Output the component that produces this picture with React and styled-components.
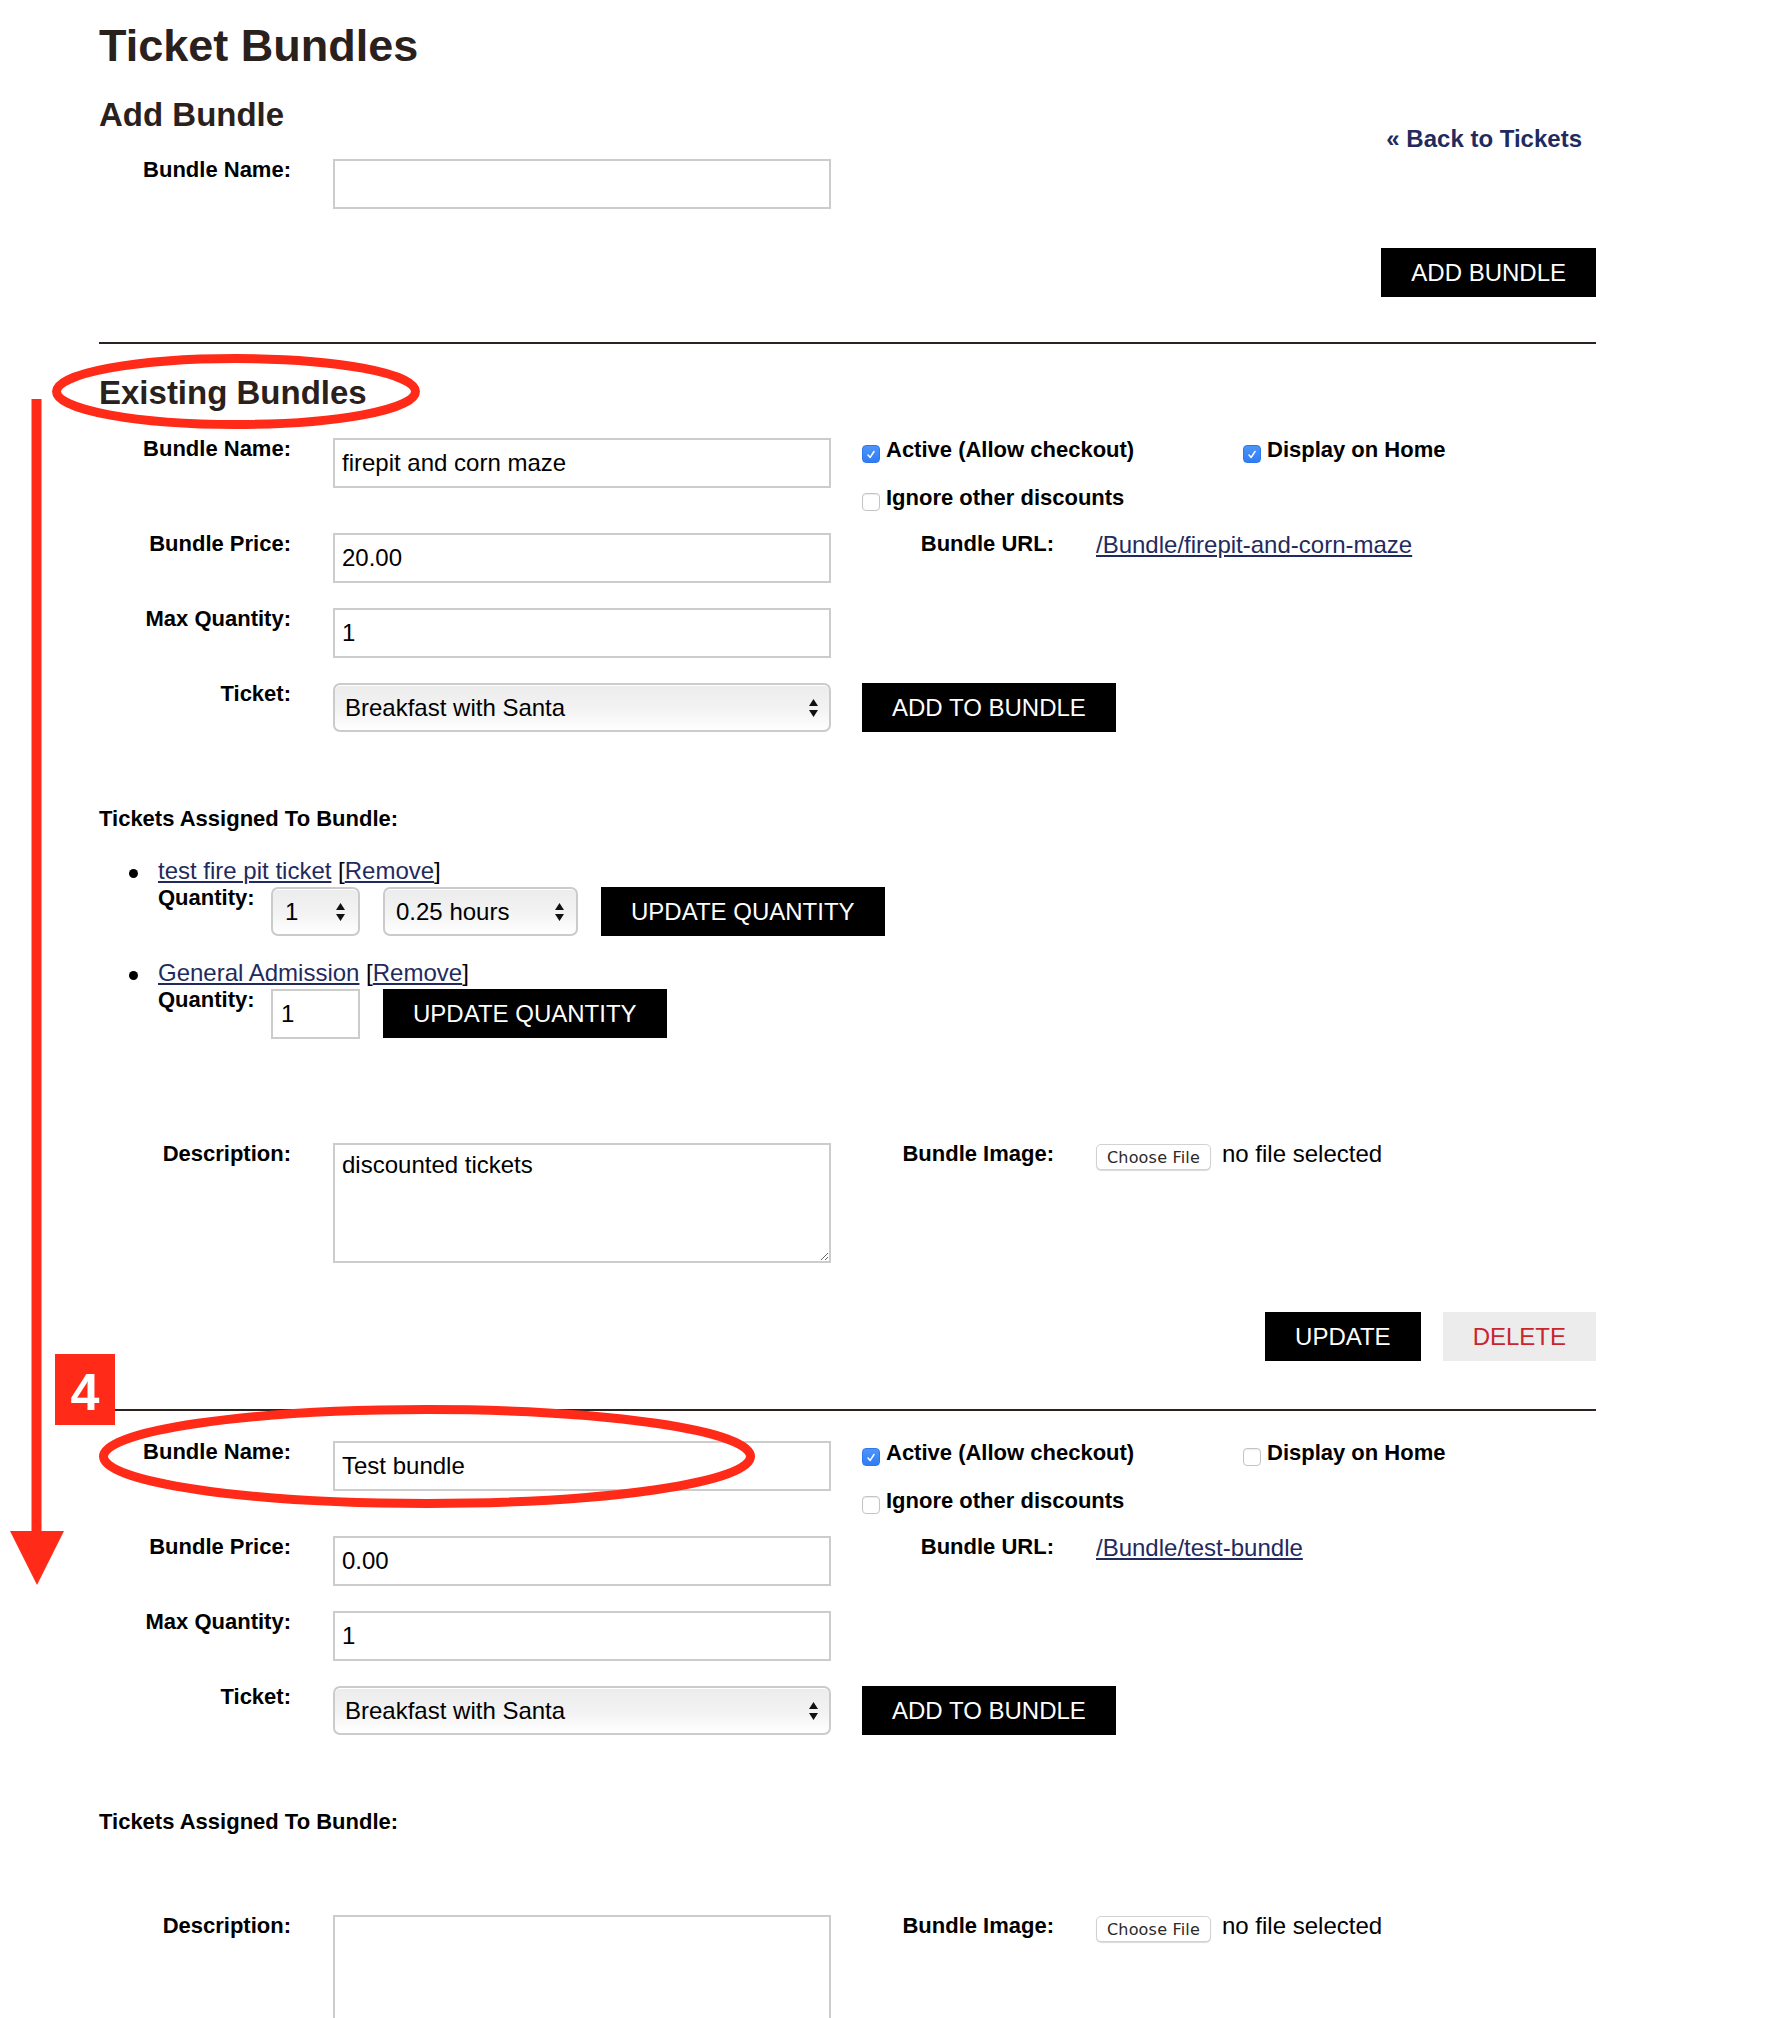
import React from 'react';
import styled, { createGlobalStyle } from 'styled-components';

const bundles = [
  {
    id: 1,
    name: 'firepit and corn maze',
    price: '20.00',
    maxQty: '1',
    active: true,
    home: true,
    ignore: false,
    slug: 'firepit-and-corn-maze',
    description: 'discounted tickets',
    tickets: [
      { name: 'test fire pit ticket', qty: '1', hours: '0.25 hours' },
      { name: 'General Admission', qty: '1' }
    ]
  },
  {
    id: 2,
    name: 'Test bundle',
    price: '0.00',
    maxQty: '1',
    active: true,
    home: false,
    ignore: false,
    slug: 'test-bundle',
    description: '',
    tickets: []
  }
];

const Arrows = () => (
  <svg width="11" height="20" viewBox="0 0 11 20">
    <path d="M5.5 1 L10 8 H1 Z M5.5 19 L10 12 H1 Z" fill="#111" />
  </svg>
);

const Check = ({ checked, children }) => (
  <CheckLabel>
    <Box $checked={checked}>
      {checked && (
        <svg width="12" height="12" viewBox="0 0 12 12">
          <path
            d="M3 7 L5.2 9.4 L9 3.5"
            fill="none"
            stroke="#fff"
            strokeWidth="1.5"
            strokeLinecap="round"
            strokeLinejoin="round"
          />
        </svg>
      )}
    </Box>
    {children}
  </CheckLabel>
);

const Select = ({ width, value, pad }) => (
  <SelectBox $width={width} $pad={pad}>
    <span>{value}</span>
    <Arrows />
  </SelectBox>
);

const BundleForm = ({ bundle, top }) => (
  <>
    <Fields $top={top}>
      <Row>
        <Half>
          <Label>Bundle Name:</Label>
          <TextInput defaultValue={bundle.name} />
        </Half>
        <CheckGroup>
          <Check checked={bundle.active}>Active (Allow checkout)</Check>
          <Check checked={bundle.home}>Display on Home</Check>
          <Check checked={bundle.ignore}>Ignore other discounts</Check>
        </CheckGroup>
      </Row>
      <Row>
        <Half>
          <Label>Bundle Price:</Label>
          <TextInput defaultValue={bundle.price} />
        </Half>
        <Half>
          <Label>Bundle URL:</Label>
          <UrlLink href="#">/Bundle/{bundle.slug}</UrlLink>
        </Half>
      </Row>
      <Row>
        <Half>
          <Label>Max Quantity:</Label>
          <TextInput defaultValue={bundle.maxQty} />
        </Half>
      </Row>
      <Row>
        <Half>
          <Label>Ticket:</Label>
          <Select width={498} pad={10} value="Breakfast with Santa" />
        </Half>
        <div>
          <Button>Add to Bundle</Button>
        </div>
      </Row>
    </Fields>

    <AssignedTitle>Tickets Assigned To Bundle:</AssignedTitle>
    {bundle.tickets.length > 0 && (
      <TicketList>
        {bundle.tickets.map((t) => (
          <TicketItem key={t.name}>
            <TicketLink href="#">{t.name}</TicketLink> [<TicketLink href="#">Remove</TicketLink>]
            <QtyRow>
              <QtyLabel>Quantity:</QtyLabel>
              {t.hours ? (
                <>
                  <Select width={89} pad={12} value={t.qty} />
                  <Select width={195} pad={11} value={t.hours} />
                </>
              ) : (
                <QtyInput defaultValue={t.qty} />
              )}
              <Button>Update Quantity</Button>
            </QtyRow>
          </TicketItem>
        ))}
      </TicketList>
    )}

    <DescRow>
      <Half>
        <Label>Description:</Label>
        <TextArea defaultValue={bundle.description} />
      </Half>
      <Half>
        <Label>Bundle Image:</Label>
        <FileField>
          <FileButton>Choose File</FileButton>
          <NoFile>no file selected</NoFile>
        </FileField>
      </Half>
    </DescRow>

    <Actions>
      <Button>Update</Button>
      <DeleteButton>Delete</DeleteButton>
    </Actions>
    <Divider $top={48} />
  </>
);

const App = () => {
  return (
    <Page>
      <GlobalStyle />
      <Content>
        <Title>Ticket Bundles</Title>

        <AddSection>
          <div>
            <SectionTitle>Add Bundle</SectionTitle>
            <AddField>
              <Label>Bundle Name:</Label>
              <TextInput />
            </AddField>
          </div>
          <AddSide>
            <BackLink href="#">« Back to Tickets</BackLink>
            <AddButton>Add Bundle</AddButton>
          </AddSide>
        </AddSection>
        <Divider $top={45} />

        <SectionTitle $top={30}>Existing Bundles</SectionTitle>
        {bundles.map((b, i) => (
          <BundleForm key={b.id} bundle={b} top={i === 0 ? 26 : 30} />
        ))}
      </Content>

      <Annotations width="1768" height="2018" viewBox="0 0 1768 2018">
        <ellipse cx="236" cy="391.5" rx="179.5" ry="33" fill="none" stroke="#ff2a17" strokeWidth="9" />
        <rect x="31.5" y="399" width="10" height="1140" fill="#ff2a17" />
        <polygon points="10,1531 64,1531 37,1585" fill="#ff2a17" />
        <ellipse cx="427" cy="1456.5" rx="323.5" ry="47" fill="none" stroke="#ff2a17" strokeWidth="9" />
      </Annotations>
      <StepBadge>4</StepBadge>
    </Page>
  );
};

export default App;

const GlobalStyle = createGlobalStyle`
  body {
    margin: 0;
    background: #fff;
    color: #000;
    font-family: 'Liberation Sans', Arial, Helvetica, sans-serif;
  }
  input, textarea, button {
    font-family: inherit;
  }
`;

const Page = styled.div`
  position: relative;
  width: 1768px;
  min-height: 2018px;
  overflow: hidden;
  padding: 20px 0 0 99px;
  box-sizing: border-box;
`;

const Content = styled.div`
  width: 1497px;
`;

const Title = styled.h1`
  margin: 0;
  font-size: 45px;
  line-height: 52px;
  font-weight: bold;
  color: #2b211c;
`;

const SectionTitle = styled.h2`
  margin: ${(p) => p.$top || 0}px 0 0;
  font-size: 33px;
  line-height: 38px;
  font-weight: bold;
  color: #2b211c;
`;

const AddSection = styled.div`
  display: flex;
  justify-content: space-between;
  align-items: flex-start;
  margin-top: 24px;
`;

const AddField = styled.div`
  display: flex;
  align-items: flex-start;
  gap: 42px;
  margin-top: 25px;
`;

const AddSide = styled.div`
  display: flex;
  flex-direction: column;
  align-items: flex-end;
`;

const BackLink = styled.a`
  margin: 29px 14px 0 0;
  font-size: 24px;
  line-height: 28px;
  font-weight: bold;
  color: #1f2b5e;
  text-decoration: none;
`;

const Divider = styled.div`
  height: 2px;
  margin-top: ${(p) => p.$top}px;
  background: #2b2320;
`;

const Fields = styled.div`
  display: flex;
  flex-direction: column;
  gap: 25px;
  margin-top: ${(p) => p.$top}px;
`;

const Row = styled.div`
  display: grid;
  grid-template-columns: 732px 734px;
  column-gap: 31px;
  align-items: start;
`;

const DescRow = styled(Row)`
  margin-top: 80px;
`;

const Half = styled.div`
  display: flex;
  align-items: flex-start;
  gap: 42px;
`;

const Label = styled.label`
  flex-shrink: 0;
  width: 192px;
  font-size: 22px;
  line-height: 22px;
  font-weight: bold;
  text-align: right;
  white-space: nowrap;
`;

const TextInput = styled.input`
  width: 498px;
  height: 50px;
  box-sizing: border-box;
  border: 2px solid #cccccc;
  padding: 0 7px;
  font-size: 24px;
  color: #000;
  background: #fff;
  outline: none;
`;

const TextArea = styled.textarea`
  width: 498px;
  height: 120px;
  box-sizing: border-box;
  border: 2px solid #cccccc;
  padding: 6px 7px;
  font-size: 24px;
  line-height: 28px;
  color: #000;
  resize: vertical;
  outline: none;
`;

const SelectBox = styled.div`
  width: ${(p) => p.$width}px;
  height: 49px;
  box-sizing: border-box;
  flex-shrink: 0;
  display: flex;
  align-items: center;
  justify-content: space-between;
  padding: 0 ${(p) => p.$pad}px 0 ${(p) => p.$pad}px;
  border: 2px solid #cbcbcb;
  border-radius: 7px;
  background: linear-gradient(to bottom, #ececec 0%, #f3f3f3 55%, #ffffff 100%);
  box-shadow: inset 0 1px 0 #ffffff;
  font-size: 24px;
  color: #000;
  white-space: nowrap;
`;

const CheckGroup = styled.div`
  display: grid;
  grid-template-columns: 381px auto;
  grid-template-rows: 24px 24px;
  row-gap: 24px;
  height: 70px;
`;

const CheckLabel = styled.label`
  display: flex;
  align-items: flex-start;
  gap: 6px;
  font-size: 22px;
  line-height: 24px;
  font-weight: bold;
  white-space: nowrap;
`;

const Box = styled.span`
  flex-shrink: 0;
  width: 18px;
  height: 18px;
  margin-top: 7px;
  box-sizing: border-box;
  border-radius: 4px;
  display: flex;
  align-items: center;
  justify-content: center;
  background: ${(p) => (p.$checked ? 'linear-gradient(to bottom, #4c95fa, #2f7cf4)' : '#fff')};
  border: 1px solid ${(p) => (p.$checked ? '#2f78ea' : '#c4c4c4')};
  box-shadow: ${(p) => (p.$checked ? 'none' : 'inset 0 1px 1px rgba(0, 0, 0, 0.08)')};
`;

const UrlLink = styled.a`
  font-size: 24px;
  line-height: 24px;
  color: #1f2b5e;
  text-decoration: underline;
  white-space: nowrap;
`;

const Button = styled.button`
  height: 49px;
  padding: 0 30px;
  border: none;
  background: #000;
  color: #fff;
  font-size: 24px;
  line-height: 1;
  text-transform: uppercase;
  white-space: nowrap;
  flex-shrink: 0;
  cursor: pointer;
`;

const AddButton = styled(Button)`
  margin-top: 95px;
`;

const DeleteButton = styled(Button)`
  background: #ececec;
  color: #c9252d;
`;

const AssignedTitle = styled.div`
  margin-top: 74px;
  font-size: 22px;
  line-height: 26px;
  font-weight: bold;
`;

const TicketList = styled.ul`
  margin: 25px 0 0;
  padding: 0 0 24px 59px;
  list-style: none;
  font-size: 24px;
  line-height: 28px;
`;

const TicketItem = styled.li`
  position: relative;

  &::before {
    content: '';
    position: absolute;
    left: -29px;
    top: 12px;
    width: 9px;
    height: 9px;
    border-radius: 50%;
    background: #000;
  }

  & + & {
    margin-top: 23px;
  }
`;

const TicketLink = styled.a`
  color: #1f2b5e;
  text-decoration: underline;
`;

const QtyRow = styled.div`
  display: flex;
  align-items: flex-start;
  gap: 23px;
  margin-top: 2px;
`;

const QtyLabel = styled.span`
  width: 90px;
  font-size: 22px;
  line-height: 22px;
  font-weight: bold;
`;

const QtyInput = styled(TextInput)`
  width: 89px;
  padding: 0 8px;
`;

const FileField = styled.div`
  display: flex;
  align-items: flex-start;
  gap: 11px;
`;

const FileButton = styled.button`
  width: 115px;
  height: 26px;
  margin-top: 1px;
  padding: 0;
  border: 1px solid #d2d2d2;
  border-radius: 5px;
  background: #fff;
  box-shadow: 0 1px 1px rgba(0, 0, 0, 0.15);
  font-family: 'DejaVu Sans', sans-serif;
  font-size: 16px;
  letter-spacing: 0.2px;
  color: #2a2a2a;
`;

const NoFile = styled.span`
  margin-top: -3px;
  font-size: 24px;
  line-height: 28px;
  white-space: nowrap;
`;

const Actions = styled.div`
  display: flex;
  justify-content: flex-end;
  gap: 22px;
  margin-top: 49px;
`;

const Annotations = styled.svg`
  position: absolute;
  top: 0;
  left: 0;
  pointer-events: none;
  z-index: 2;
`;

const StepBadge = styled.div`
  position: absolute;
  left: 55px;
  top: 1354px;
  width: 60px;
  height: 71px;
  display: flex;
  align-items: center;
  justify-content: center;
  padding-top: 4px;
  box-sizing: border-box;
  background: #ff2a17;
  color: #fff;
  font-size: 52px;
  font-weight: bold;
  z-index: 3;
`;
